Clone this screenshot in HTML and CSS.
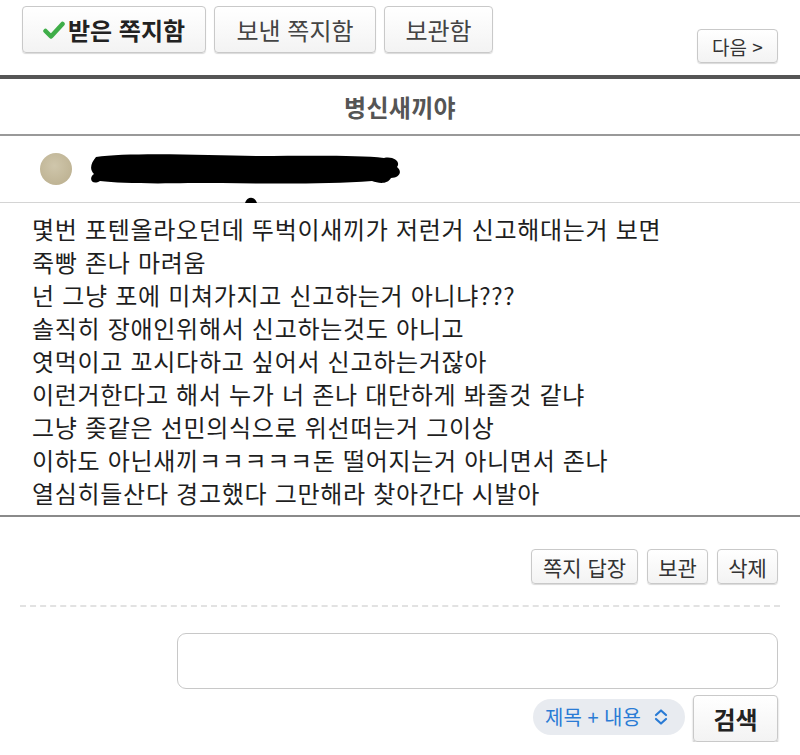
FILE: index.html
```html
<!DOCTYPE html>
<html lang="ko">
<head>
    <meta charset="UTF-8">
    <meta name="viewport" content="width=device-width, initial-scale=1.0">
    <title>쪽지함</title>
    <link rel="stylesheet" href="styles.css">
</head>
<body>
    <div class="tabs">
        <button class="tab active">
            <svg class="check" width="22" height="18" viewBox="0 0 22 18">
                <path d="M2.5 10 L8 15.5 L19.5 3" fill="none" stroke="#3fae49" stroke-width="4.5" stroke-linecap="round" stroke-linejoin="round"/>
            </svg>받은 쪽지함</button>
        <button class="tab">보낸 쪽지함</button>
        <button class="tab">보관함</button>
        <button class="next">다음 &gt;</button>
    </div>

    <div class="title">병신새끼야</div>

    <div class="sender">
        <span class="avatar"></span>
        <svg class="redact" width="320" height="60" viewBox="0 0 320 60">
            <path d="M8 12 C40 7 120 10 170 11 C220 11 270 10 296 13 C306 11 313 17 309 22 C315 27 311 33 303 33 C299 40 290 38 284 36 C230 40 160 38 100 38 C60 39 30 38 12 36 C4 41 0 33 6 29 C1 24 3 18 8 12 Z" fill="#000"/>
            <path d="M157 58 C159 51 167 51 169 58 Z" fill="#000"/>
        </svg>
    </div>

    <div class="message">
        <p>몇번 포텐올라오던데 뚜벅이새끼가 저런거 신고해대는거 보면</p>
        <p>죽빵 존나 마려움</p>
        <p>넌 그냥 포에 미쳐가지고 신고하는거 아니냐???</p>
        <p>솔직히 장애인위해서 신고하는것도 아니고</p>
        <p>엿먹이고 꼬시다하고 싶어서 신고하는거잖아</p>
        <p>이런거한다고 해서 누가 너 존나 대단하게 봐줄것 같냐</p>
        <p>그냥 좆같은 선민의식으로 위선떠는거 그이상</p>
        <p>이하도 아닌새끼ㅋㅋㅋㅋㅋ돈 떨어지는거 아니면서 존나</p>
        <p>열심히들산다 경고했다 그만해라 찾아간다 시발아</p>
    </div>

    <div class="actions">
        <button class="small reply">쪽지 답장</button>
        <button class="small">보관</button>
        <button class="small">삭제</button>
    </div>

    <div class="search">
        <textarea class="search-box"></textarea>
        <div class="search-row">
            <span class="select">제목 + 내용
                <svg width="16" height="18" viewBox="0 0 16 18">
                    <path d="M3 7 L8 2.5 L13 7 M3 11 L8 15.5 L13 11" fill="none" stroke="#2a7bd5" stroke-width="2.2" stroke-linecap="round" stroke-linejoin="round"/>
                </svg>
            </span>
            <button class="search-btn">검색</button>
        </div>
    </div>
</body>
</html>
```

FILE: styles.css
```css
body, html {
    margin: 0;
    padding: 0;
    background-color: #fff;
    color: #222;
    font-family: "Noto Sans CJK KR", "Noto Sans", sans-serif;
}

button {
    font-family: inherit;
    background: linear-gradient(#fff, #f3f3f3);
    border: 1px solid #c9c9c9;
    border-radius: 4px;
    color: #333;
    padding: 0;
    box-shadow: 0 1px 1px rgba(0, 0, 0, 0.15);
}

.tabs {
    display: flex;
    align-items: flex-start;
    gap: 8px;
    padding: 6px 22px 0 22px;
    height: 79px;
    box-sizing: border-box;
    border-bottom: 4px solid #555;
}

.tab {
    height: 47px;
    padding: 0;
    font-size: 24px;
    color: #444;
}

.tab.active {
    width: 184px;
    font-weight: bold;
    color: #222;
    display: flex;
    align-items: center;
    justify-content: center;
}

.tab:nth-child(2) {
    width: 162px;
}

.tab:nth-child(3) {
    width: 109px;
}

.check {
    margin-right: 3px;
}

.next {
    margin-left: auto;
    margin-top: 23px;
    width: 81px;
    height: 34px;
    font-size: 19px;
}

.title {
    height: 55px;
    line-height: 55px;
    text-align: center;
    font-size: 24px;
    font-weight: bold;
    color: #555;
    letter-spacing: 0.3px;
    border-bottom: 2px solid #999;
}

.sender {
    display: flex;
    align-items: center;
    height: 66px;
    padding-left: 40px;
    border-bottom: 1px solid #d4d4d4;
}

.avatar {
    width: 32px;
    height: 32px;
    border-radius: 50%;
    background: radial-gradient(circle at 45% 40%, #cfc6ab, #b9ad8c);
}

.redact {
    margin-left: 16px;
    margin-top: 12px;
}

.message {
    padding: 9px 0 6px 32px;
    border-bottom: 2px solid #8a8a8a;
}

.message p {
    margin: 0;
    font-size: 24px;
    line-height: 33px;
    letter-spacing: 0.7px;
    color: #1e1e1e;
}

.actions {
    display: flex;
    justify-content: flex-end;
    gap: 9px;
    margin: 0 20px;
    padding: 32px 2px 21px 0;
    border-bottom: 2px dashed #e2e2e2;
}

.small {
    width: 61px;
    height: 35px;
    font-size: 21px;
    color: #333;
}

.small.reply {
    width: 107px;
}

.search {
    display: flex;
    flex-direction: column;
    align-items: flex-end;
    padding: 26px 22px 0 0;
    gap: 6px;
}

.search-box {
    width: 601px;
    height: 56px;
    box-sizing: border-box;
    border: 1px solid #c8c8c8;
    border-radius: 9px;
    resize: none;
}

.search-row {
    display: flex;
    align-items: center;
    gap: 8px;
}

.select {
    display: flex;
    align-items: center;
    gap: 12px;
    width: 152px;
    box-sizing: border-box;
    height: 36px;
    padding: 0 10px 0 12px;
    margin-top: -4px;
    background: #e8ebf0;
    border-radius: 18px;
    color: #2a7bd5;
    font-size: 20px;
}

.search-btn {
    width: 85px;
    height: 47px;
    font-size: 24px;
    font-weight: bold;
    color: #222;
    box-shadow: 0 2px 2px rgba(0, 0, 0, 0.25);
}
```
